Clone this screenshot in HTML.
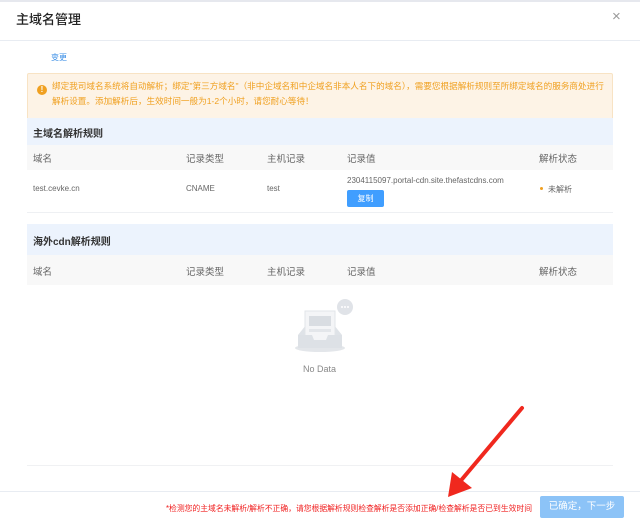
<!DOCTYPE html>
<html><head><meta charset="utf-8"><style>
*{margin:0;padding:0;box-sizing:border-box}
body{width:640px;height:522px;background:#fff;font-family:"Liberation Sans","Noto Sans CJK SC",sans-serif;position:relative;overflow:hidden;color:#555}
.a{position:absolute;white-space:nowrap}
</style></head><body>
<div class="a" style="left:0;top:0;width:640px;height:2px;background:#e6e8ee"></div>
<div class="a" style="left:16px;top:9px;font-size:13px;color:#222;font-weight:500">主域名管理</div>
<div class="a" style="left:612px;top:8px;font-size:15px;color:#999">×</div>
<div class="a" style="left:0;top:40px;width:640px;height:1px;background:#e8ecf2"></div>
<div class="a" style="left:51px;top:52px;font-size:8px;color:#3a8ee6">变更</div>
<div class="a" style="left:27px;top:73px;width:586px;height:57px;background:#fdf3e6;border:1px solid #f8e3c4;border-radius:2px"></div>
<div class="a" style="left:37px;top:85px;width:10px;height:10px;border-radius:50%;background:#f0a020;color:#fff;font-size:8px;text-align:center;line-height:10px;font-weight:bold">!</div>
<div class="a" style="left:52px;top:79px;font-size:8.6px;line-height:15px;color:#f0a020">绑定我司域名系统将自动解析；绑定"第三方域名"（非中企域名和中企域名非本人名下的域名），需要您根据解析规则至所绑定域名的服务商处进行<br>解析设置。添加解析后，生效时间一般为1-2个小时，请您耐心等待！</div>
<div class="a" style="left:27px;top:118px;width:586px;height:27px;background:#ecf3fd"></div>
<div class="a" style="left:33px;top:125px;font-size:10px;color:#333;font-weight:bold">主域名解析规则</div>
<div class="a" style="left:27px;top:145px;width:586px;height:25px;background:#f8f8f8"></div>
<div class="a" style="left:33px;top:151px;font-size:9.5px;color:#666">域名</div>
<div class="a" style="left:186px;top:151px;font-size:9.5px;color:#666">记录类型</div>
<div class="a" style="left:267px;top:151px;font-size:9.5px;color:#666">主机记录</div>
<div class="a" style="left:347px;top:151px;font-size:9.5px;color:#666">记录值</div>
<div class="a" style="left:539px;top:151px;font-size:9.5px;color:#666">解析状态</div>
<div class="a" style="left:33px;top:184px;font-size:8px;color:#666">test.cevke.cn</div>
<div class="a" style="left:186px;top:184px;font-size:8px;color:#666">CNAME</div>
<div class="a" style="left:267px;top:184px;font-size:8px;color:#666">test</div>
<div class="a" style="left:347px;top:176px;font-size:8px;color:#666">2304115097.portal-cdn.site.thefastcdns.com</div>
<div class="a" style="left:347px;top:190px;width:37px;height:17px;background:#409eff;border-radius:2px;color:#fff;font-size:8px;text-align:center;line-height:17px">复制</div>
<div class="a" style="left:540px;top:187px;width:3px;height:3px;border-radius:50%;background:#f0a020"></div>
<div class="a" style="left:548px;top:184px;font-size:8px;color:#666">未解析</div>
<div class="a" style="left:27px;top:212px;width:586px;height:1px;background:#eef0f3"></div>
<div class="a" style="left:27px;top:224px;width:586px;height:31px;background:#ecf3fd"></div>
<div class="a" style="left:33px;top:233px;font-size:10px;color:#333;font-weight:bold">海外cdn解析规则</div>
<div class="a" style="left:27px;top:255px;width:586px;height:30px;background:#f8f8f8"></div>
<div class="a" style="left:33px;top:264px;font-size:9.5px;color:#666">域名</div>
<div class="a" style="left:186px;top:264px;font-size:9.5px;color:#666">记录类型</div>
<div class="a" style="left:267px;top:264px;font-size:9.5px;color:#666">主机记录</div>
<div class="a" style="left:347px;top:264px;font-size:9.5px;color:#666">记录值</div>
<div class="a" style="left:539px;top:264px;font-size:9.5px;color:#666">解析状态</div>
<svg class="a" style="left:290px;top:297px" width="66" height="60" viewBox="0 0 66 60">
<ellipse cx="30" cy="51" rx="25" ry="4" fill="#e3e6ea"/>
<path d="M8 38 L16 28 L44 28 L52 38 L52 51 L8 51 Z" fill="#dfe3e8"/>
<rect x="15" y="14" width="30" height="32" fill="#f4f5f7" stroke="#e2e5e9"/>
<rect x="19" y="19" width="22" height="10" fill="#d9dde2"/>
<rect x="19" y="32" width="22" height="3" fill="#e3e6ea"/>
<path d="M8 38 L22 38 L24 43 L36 43 L38 38 L52 38 L52 51 L8 51 Z" fill="#dde1e6"/>
<circle cx="55" cy="10" r="8" fill="#e0e3e8"/>
<circle cx="52" cy="10" r="1" fill="#fff"/><circle cx="55" cy="10" r="1" fill="#fff"/><circle cx="58" cy="10" r="1" fill="#fff"/>
</svg>
<div class="a" style="left:303px;top:364px;font-size:9px;color:#888">No Data</div>
<div class="a" style="left:27px;top:465px;width:586px;height:1px;background:#f0f1f3"></div>
<div class="a" style="left:0;top:491px;width:640px;height:1px;background:#e8ecf2"></div>
<div class="a" style="left:166px;top:503px;font-size:7.8px;color:#f02020">*检测您的主域名未解析/解析不正确，请您根据解析规则检查解析是否添加正确/检查解析是否已到生效时间</div>
<div class="a" style="left:540px;top:496px;width:84px;height:22px;background:#8cc3f7;border-radius:2px;color:#fff;font-size:9.5px;text-align:center;line-height:22px">已确定，下一步</div>
<svg class="a" style="left:440px;top:400px" width="90" height="105" viewBox="0 0 90 105">
<path d="M82 8 L18 84" stroke="#f0281e" stroke-width="4" stroke-linecap="round"/>
<path d="M8 97 L12 72 L32 88 Z" fill="#f0281e"/>
</svg>
</body></html>
